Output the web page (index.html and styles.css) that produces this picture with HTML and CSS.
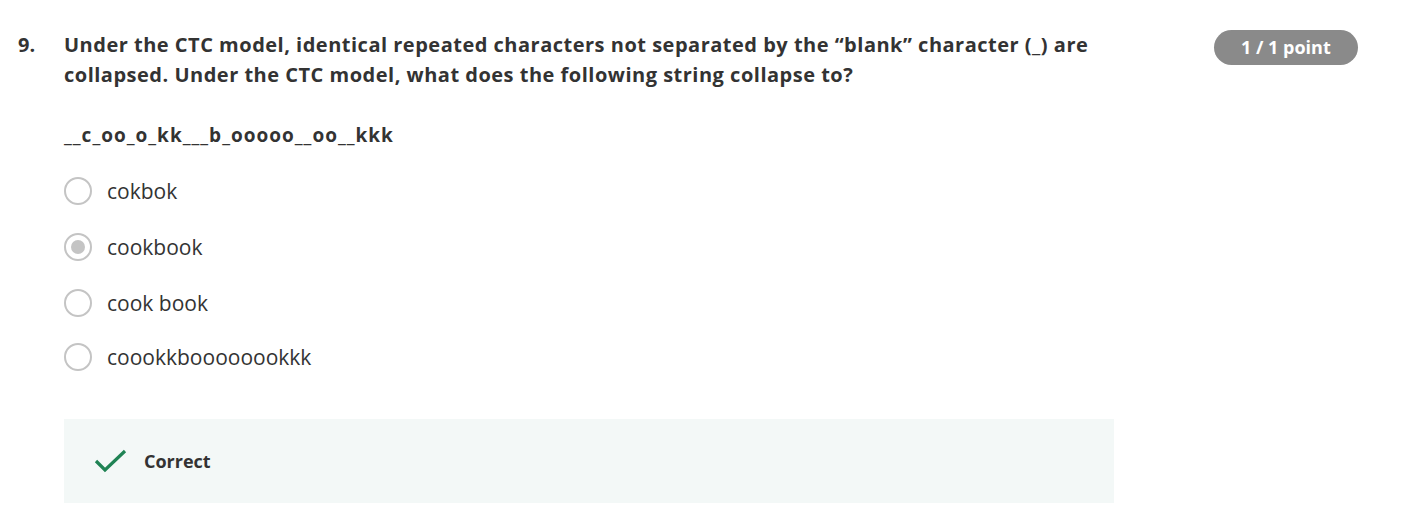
FILE: index.html
```html
<!DOCTYPE html>
<html>
<head>
<meta charset="utf-8">
<link rel="stylesheet" href="styles.css">
</head>
<body>
<div class="question">
  <div class="num">9.</div>
  <div class="main">
    <div class="prompt">Under the CTC model, identical repeated characters not separated by the “blank” character (_) are collapsed. Under the CTC model, what does the following string collapse to?</div>
    <div class="string">__c_oo_o_kk___b_ooooo__oo__kkk</div>
    <div class="options">
      <div class="opt"><span class="radio"></span><span class="label">cokbok</span></div>
      <div class="opt"><span class="radio checked"></span><span class="label">cookbook</span></div>
      <div class="opt"><span class="radio"></span><span class="label">cook book</span></div>
      <div class="opt"><span class="radio"></span><span class="label">coookkboooooookkk</span></div>
    </div>
    <div class="feedback">
      <svg class="check" width="34" height="26" viewBox="0 0 34 26"><path d="M2 13 L11 22 L31 3" fill="none" stroke="#1f8354" stroke-width="3.2"/></svg>
      <span class="fb-text">Correct</span>
    </div>
  </div>
  <div class="side"><span class="badge">1 / 1 point</span></div>
</div>
</body>
</html>
```
FILE: styles.css
```css
html, body { margin: 0; padding: 0; background: #fff; }
body { font-family: "Open Sans", "Liberation Sans", sans-serif; color: #333; }
.question { display: flex; padding: 30px 0 0 18px; }
.num { width: 46px; font-weight: 700; font-size: 20px; line-height: 30px; color: #333; }
.main { width: 1050px; }
.prompt { font-weight: 700; font-size: 20px; line-height: 30px; letter-spacing: 0.5px; color: #333; width: 1045px; }
.string { font-weight: 700; font-size: 19px; line-height: 30px; margin-top: 30px; letter-spacing: 1px; }
.options { margin-top: 13px; display: flex; flex-direction: column; }
.opt { display: flex; align-items: center; height: 56px; }
.opt:last-child { height: 52px; }
.radio { box-sizing: border-box; width: 28px; height: 28px; border: 2px solid #c4c4c4; border-radius: 50%; margin-right: 15px; display: flex; align-items: center; justify-content: center; }
.radio.checked::after { content: ""; width: 14px; height: 14px; border-radius: 50%; background: #c4c4c4; }
.label { font-size: 21px; color: #333; }
.feedback { margin-top: 36px; height: 84px; background: #f3f8f7; display: flex; align-items: center; padding-left: 30px; }
.check { margin-right: 16px; }
.fb-text { font-weight: 700; font-size: 18px; color: #333; }
.side { margin-left: 100px; }
.badge { display: inline-block; background: #8a8a8a; color: #fff; font-weight: 700; font-size: 18px; line-height: 35px; height: 35px; padding: 0 27px; border-radius: 18px; }
```
